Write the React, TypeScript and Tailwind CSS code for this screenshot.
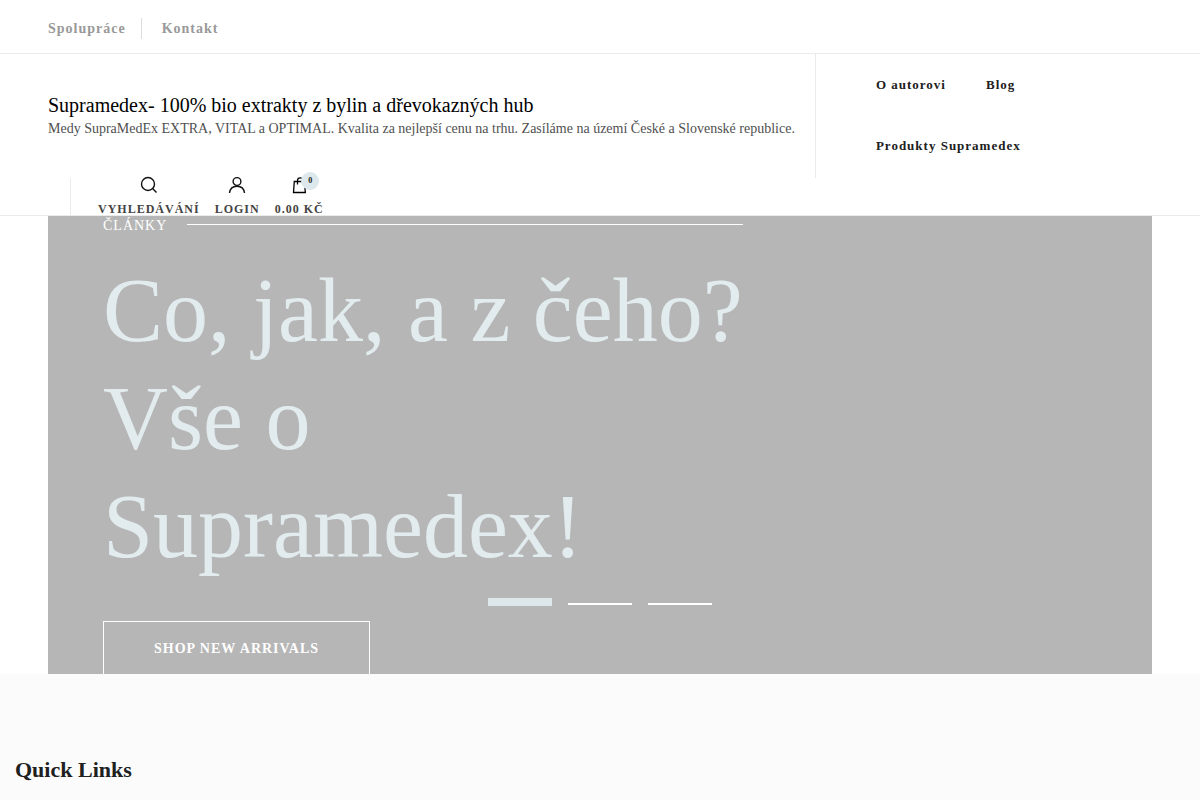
const topLinks = ["Spolupráce", "Kontakt"];
const menu = ["O autorovi", "Blog", "Produkty Supramedex"];

function SearchIcon() {
    return (
        <svg className="size-[18px]" viewBox="0 0 18 18" fill="none" stroke="#111" strokeWidth="1.4">
            <circle cx="8" cy="8" r="6.500" />
            <path d="M12.600 12.600 16.500 16.500" />
        </svg>
    );
}

function UserIcon() {
    return (
        <svg className="size-[18px]" viewBox="0 0 18 18" fill="none" stroke="#111" strokeWidth="1.4">
            <circle cx="9" cy="5.500" r="3.900" />
            <path d="M1.500 17C2 12.700 5 10.200 9 10.200s7 2.500 7.500 6.800" />
        </svg>
    );
}

function BagIcon() {
    return (
        <svg className="size-[18px]" viewBox="0 0 18 18" fill="none" stroke="#000" strokeWidth="1.3">
            <path d="M4.300 5.500h10.200L15.300 16.500H3.500Z" />
            <path d="M7.500 8.500V4.500a2.700 2.700 0 0 1 5.400 0v4" />
        </svg>
    );
}

export default function App() {
    return (
        <div className="font-['Liberation_Serif',serif] text-[#202020]">
            {/* Top bar */}
            <div className="border-b border-[#ebebeb] px-12 pt-[18px] pb-3.5">
                <nav className="flex text-sm leading-[21px] font-bold tracking-[1px] text-[#999]">
                    {topLinks.map((label) => (
                        <a key={label} href="#" className="mr-5 border-r border-[#ddd] pr-[15px] last:border-0">
                            {label}
                        </a>
                    ))}
                </nav>
            </div>

            {/* Header */}
            <header className="border-b border-[#ebebeb] px-12">
                <div className="flex">
                    <div className="shrink-0 self-center pr-5 pb-px">
                        <a href="#" className="mb-px block text-xl leading-6 text-black">
                            Supramedex- 100% bio extrakty z bylin a dřevokazných hub
                        </a>
                        <p className="text-sm leading-[21px] text-[#505050]">
                            Medy SupraMedEx EXTRA, VITAL a OPTIMAL. Kvalita za nejlepší cenu na trhu. Zasíláme na území České a Slovenské republice.
                        </p>
                    </div>
                    <nav className="flex flex-1 flex-wrap gap-x-10 border-l border-[#ebebeb] pb-0.5 pl-[60px] text-[13px] leading-[61px] font-bold tracking-[1px]">
                        {menu.map((label) => (
                            <a key={label} href="#">
                                {label}
                            </a>
                        ))}
                    </nav>
                </div>
                <div className="ml-[22px] flex h-[37px] items-end gap-[15px] border-l border-[#ebebeb] pl-[27px] text-xs leading-3 text-[#444]">
                    <button className="flex flex-col items-center gap-[9px] font-bold tracking-[1px] uppercase">
                        <SearchIcon />
                        Vyhledávání
                    </button>
                    <a href="#" className="flex flex-col items-center gap-[9px] font-bold tracking-[1px] uppercase">
                        <UserIcon />
                        Login
                    </a>
                    <a href="#" className="flex flex-col items-center gap-[9px] font-bold tracking-[1px] uppercase">
                        <span className="relative">
                            <BagIcon />
                            <span className="absolute -top-1 left-[11px] size-[18px] rounded-full bg-[#dce8ec] text-center text-[8px] leading-[18px] tracking-normal text-[#202020]">
                                0
                            </span>
                        </span>
                        0.00 Kč
                    </a>
                </div>
            </header>

            {/* Hero slider */}
            <section className="relative mx-12 h-[458px] overflow-hidden bg-[#b6b6b6] px-[55px]">
                <div className="max-w-[640px]">
                    <div className="flex items-start gap-5 text-sm leading-[19px] tracking-[1px] text-white uppercase">
                        Články
                        <span className="mt-2 h-px flex-1 bg-white" />
                    </div>
                    <h1 className="mt-[22px] text-[90px] leading-[108px] text-[#e2ecef]">
                        Co, jak, a z čeho?
                        <br />
                        Vše o Supramedex!
                    </h1>
                    <a
                        href="#"
                        className="mt-10 inline-block border border-white px-[50px] py-4 text-sm leading-[21px] font-bold tracking-[1px] text-white uppercase"
                    >
                        Shop new arrivals
                    </a>
                </div>
                <div className="absolute inset-x-0 bottom-[68px] flex items-start justify-center gap-4">
                    <button aria-label="Slide 1" className="h-2 w-16 bg-[#dce8ec]" />
                    <button aria-label="Slide 2" className="h-[7px] w-16 border-b-2 border-white" />
                    <button aria-label="Slide 3" className="h-[7px] w-16 border-b-2 border-white" />
                </div>
            </section>

            {/* Footer */}
            <footer className="bg-[#fbfbfb] px-[15px] pt-20 pb-12">
                <h2 className="text-[22px] leading-8 font-bold">Quick Links</h2>
            </footer>
        </div>
    );
}
